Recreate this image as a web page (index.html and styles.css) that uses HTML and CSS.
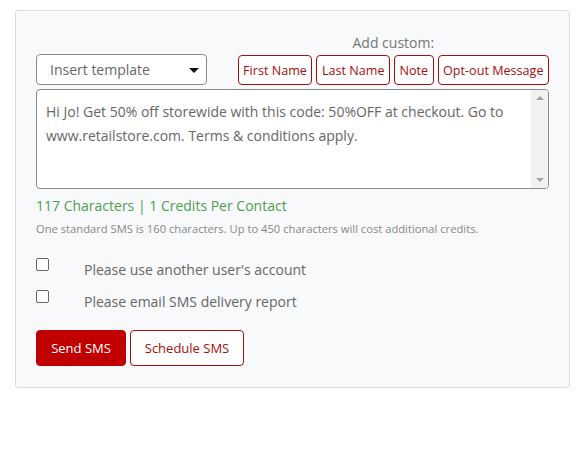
FILE: index.html
```
<!DOCTYPE html>
<html>
<head>
<meta charset="utf-8">
<link rel="stylesheet" href="styles.css">
</head>
<body>
<div class="card">
  <div class="top-row">
    <div class="select">
      <span>Insert template</span>
      <span class="caret"></span>
    </div>
    <div class="custom">
      <div class="custom-label">Add custom:</div>
      <div class="tags">
        <button class="tag">First Name</button>
        <button class="tag">Last Name</button>
        <button class="tag">Note</button>
        <button class="tag">Opt-out Message</button>
      </div>
    </div>
  </div>
  <div class="message-box">
    <textarea class="message">Hi Jo! Get 50% off storewide with this code: 50%OFF at checkout. Go to www.retailstore.com. Terms &amp; conditions apply.</textarea>
    <div class="scrollbar">
      <span class="arrow-up"></span>
      <span class="arrow-down"></span>
    </div>
  </div>
  <div class="count">117 Characters | 1 Credits Per Contact</div>
  <div class="hint">One standard SMS is 160 characters. Up to 450 characters will cost additional credits.</div>
  <label class="check"><span class="box"></span><span class="check-text">Please use another user's account</span></label>
  <label class="check"><span class="box"></span><span class="check-text">Please email SMS delivery report</span></label>
  <div class="actions">
    <button class="btn btn-primary">Send SMS</button>
    <button class="btn btn-outline">Schedule SMS</button>
  </div>
</div>
</body>
</html>
```
FILE: styles.css
```
* { box-sizing: border-box; }
body {
  margin: 10px 12px 0 15px;
  font-family: "Open Sans", "Liberation Sans", sans-serif;
  background: #fff;
}
.card {
  width: 555px;
  background: #f8f9fa;
  border: 1px solid #dcdcdc;
  border-radius: 3px;
  padding: 22px 20px 21px 20px;
}
.top-row {
  display: flex;
  justify-content: space-between;
  align-items: flex-end;
}
.select {
  width: 171px;
  height: 31px;
  border: 1px solid #8a8a8a;
  border-radius: 4px;
  background: #fff;
  display: flex;
  align-items: center;
  justify-content: space-between;
  padding: 0 7px 0 13px;
  font-size: 14px;
  color: #666;
}
.caret {
  width: 0;
  height: 0;
  border-left: 5px solid transparent;
  border-right: 5px solid transparent;
  border-top: 5px solid #111;
  margin-top: 2px;
}
.custom {
  display: flex;
  flex-direction: column;
  align-items: center;
}
.custom-label {
  font-size: 14px;
  color: #777;
  line-height: 20px;
  margin-bottom: 2px;
}
.tags {
  display: flex;
  gap: 4px;
}
.tag {
  height: 30px;
  padding: 0 4.5px;
  font-family: inherit;
  font-size: 12.6px;
  color: #a40e0e;
  background: #fff;
  border: 1px solid #a40e0e;
  border-radius: 4px;
}
.message-box {
  display: flex;
  width: 513px;
  height: 100px;
  margin-top: 4px;
  border: 1px solid #8a8a8a;
  border-radius: 4px;
  background: #fff;
  overflow: hidden;
}
.message {
  flex: 1;
  display: block;
  height: 100%;
  margin: 0;
  padding: 10px 9px 6px 9px;
  border: none;
  outline: none;
  font-family: inherit;
  font-size: 14px;
  line-height: 24px;
  color: #666;
  resize: none;
  overflow: hidden;
  background: transparent;
}
.scrollbar {
  width: 17px;
  background: #f1f1f1;
  display: flex;
  flex-direction: column;
  justify-content: space-between;
  align-items: center;
  padding: 6px 0 6px 0;
}
.arrow-up {
  width: 0;
  height: 0;
  border-left: 4px solid transparent;
  border-right: 4px solid transparent;
  border-bottom: 4px solid #a3a3a3;
}
.arrow-down {
  width: 0;
  height: 0;
  border-left: 4px solid transparent;
  border-right: 4px solid transparent;
  border-top: 4px solid #a3a3a3;
}
.count {
  margin-top: 7px;
  font-size: 14px;
  line-height: 20px;
  color: #4f9d4f;
}
.hint {
  margin-top: 5px;
  font-size: 11.2px;
  line-height: 16px;
  color: #888;
}
.check {
  display: flex;
  align-items: flex-start;
  margin-top: 21px;
}
.check + .check { margin-top: 10px; }
.box {
  width: 13px;
  height: 13px;
  border: 1px solid #666;
  border-radius: 2px;
  background: #fff;
}
.check-text {
  margin-left: 35px;
  margin-top: 2px;
  font-size: 14px;
  line-height: 20px;
  color: #666;
}
.actions {
  display: flex;
  gap: 4px;
  margin-top: 18px;
}
.btn {
  height: 36px;
  font-family: inherit;
  font-size: 13px;
  border-radius: 4px;
}
.btn-primary {
  width: 90px;
  background: #c00000;
  color: #fff;
  border: 1px solid #c00000;
}
.btn-outline {
  width: 114px;
  background: #fff;
  color: #a40e0e;
  border: 1px solid #a40e0e;
}
```
